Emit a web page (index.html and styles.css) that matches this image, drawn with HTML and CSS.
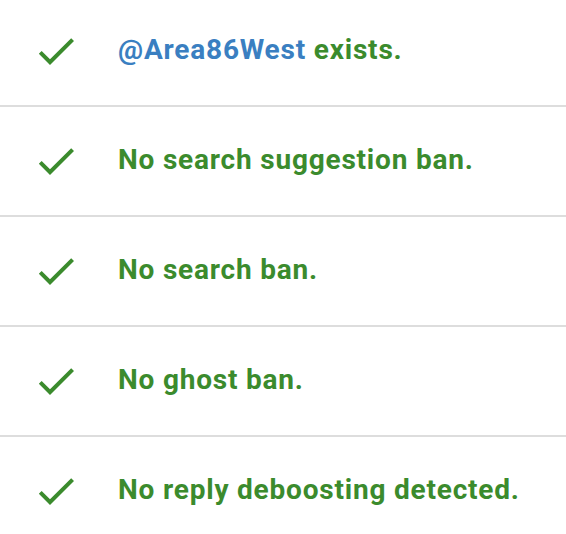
FILE: index.html
```html
<!DOCTYPE html>
<html>
<head>
<meta charset="utf-8">
<link rel="stylesheet" href="styles.css">
</head>
<body>
<ul class="results">
  <li class="row">
    <svg class="check" viewBox="0 0 24 24"><path d="M9 16.17L4.83 12l-1.42 1.41L9 19 21 7l-1.41-1.41z"/></svg>
    <span class="msg"><span class="handle">@Area86West</span> exists.</span>
  </li>
  <li class="row">
    <svg class="check" viewBox="0 0 24 24"><path d="M9 16.17L4.83 12l-1.42 1.41L9 19 21 7l-1.41-1.41z"/></svg>
    <span class="msg">No search suggestion ban.</span>
  </li>
  <li class="row">
    <svg class="check" viewBox="0 0 24 24"><path d="M9 16.17L4.83 12l-1.42 1.41L9 19 21 7l-1.41-1.41z"/></svg>
    <span class="msg">No search ban.</span>
  </li>
  <li class="row">
    <svg class="check" viewBox="0 0 24 24"><path d="M9 16.17L4.83 12l-1.42 1.41L9 19 21 7l-1.41-1.41z"/></svg>
    <span class="msg">No ghost ban.</span>
  </li>
  <li class="row">
    <svg class="check" viewBox="0 0 24 24"><path d="M9 16.17L4.83 12l-1.42 1.41L9 19 21 7l-1.41-1.41z"/></svg>
    <span class="msg">No reply deboosting detected.</span>
  </li>
</ul>
</body>
</html>
```

FILE: styles.css
```css
html, body {
  margin: 0;
  padding: 0;
  background: #ffffff;
}
.results {
  list-style: none;
  margin: -3px 0 0 0;
  padding: 0;
}
.row {
  display: flex;
  align-items: center;
  height: 108px;
  border-bottom: 2px solid #dddddd;
  padding-left: 32px;
}
.row:last-child {
  border-bottom: none;
}
.check {
  width: 48px;
  height: 48px;
  flex: none;
  fill: #3b8b2d;
  margin-right: 38px;
}
.msg {
  font-family: Roboto, "Liberation Sans", sans-serif;
  font-weight: 700;
  font-size: 28px;
  letter-spacing: 0.8px;
  color: #3b8b2d;
  padding-bottom: 4px;
}
.handle {
  color: #3a7fc1;
}
```
